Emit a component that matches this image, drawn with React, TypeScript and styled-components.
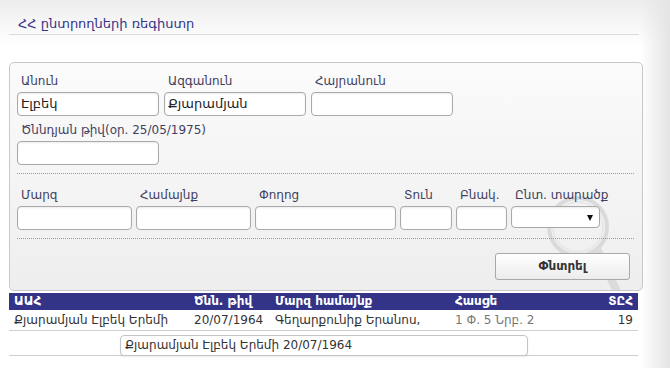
import React from 'react';
import styled, { createGlobalStyle } from 'styled-components';

const GlobalStyle = createGlobalStyle`
  html, body {
    margin: 0;
    padding: 0;
  }
  body {
    width: 670px;
    height: 368px;
    overflow: hidden;
    font-family: "DejaVu Sans", Verdana, sans-serif;
    font-size: 12px;
    color: #333;
    background:
      linear-gradient(to right, rgba(255,255,255,0) 0, rgba(255,255,255,0) 640px, #e4e4e4 670px),
      linear-gradient(to bottom, #ededed 0, #ffffff 45px);
  }
`

const Page = styled.div`
  padding: 0 31px 0 9px;
`

const TitleBar = styled.div`
  padding: 17px 0 0 9px;
  height: 17px;
  border-bottom: 1px solid #dcdcdc;
  color: #333388;
  font-size: 13px;
  line-height: 14px;
`

const Panel = styled.div`
  position: relative;
  margin-top: 27px;
  width: 617px;
  padding: 10px 8px 10px 7px;
  border: 1px solid #c8c8c8;
  border-radius: 5px;
  background: linear-gradient(to bottom, #fbfbfb 0, #eeeeee 100%);
  overflow: hidden;
`

const Row = styled.div<{ $gap?: number }>`
  display: flex;
  gap: ${p => p.$gap ?? 5}px;
  margin-bottom: 6px;
  position: relative;
  z-index: 1;
`

const Field = styled.div<{ $w: number }>`
  display: flex;
  flex-direction: column;
  width: ${p => p.$w}px;
`

const Label = styled.div`
  height: 16px;
  line-height: 16px;
  padding-left: 4px;
  margin-bottom: 3px;
  color: #3f3f5f;
  white-space: nowrap;
`

const Input = styled.div`
  box-sizing: border-box;
  height: 24px;
  line-height: 22px;
  padding-left: 3px;
  border: 1px solid #a9a9a9;
  border-radius: 4px;
  background: #fff;
  box-shadow: inset 0 1px 2px rgba(0,0,0,0.08);
  color: #222;
  font-size: 13px;
`

const Select = styled(Input)`
  height: 22px;
  position: relative;
  &::after {
    content: '';
    position: absolute;
    right: 6px;
    top: 8px;
    border-left: 3px solid transparent;
    border-right: 3px solid transparent;
    border-top: 6px solid #111;
  }
`

const Divider = styled.div<{ $after: number }>`
  border-top: 1px dotted #9a9a9a;
  margin: 8px 0 ${p => p.$after}px 0;
  position: relative;
  z-index: 1;
`

const ButtonRow = styled.div`
  display: flex;
  justify-content: flex-end;
  padding-right: 4px;
  position: relative;
  z-index: 1;
`

const Button = styled.div`
  box-sizing: border-box;
  width: 135px;
  height: 27px;
  line-height: 25px;
  text-align: center;
  border: 1px solid #a8a8a8;
  border-radius: 3px;
  background: linear-gradient(to bottom, #ffffff 0, #ececec 100%);
  font-weight: bold;
  color: #333;
`

const Watermark = styled.svg`
  position: absolute;
  left: 528px;
  top: 124px;
  opacity: 0.75;
`

const Table = styled.div`
  margin-top: 2px;
  width: 629px;
`

const cols = '180px 81px 180px 1fr 50px';

const HeadRow = styled.div`
  display: grid;
  grid-template-columns: ${cols};
  height: 17px;
  line-height: 17px;
  padding: 0 5px;
  background: #333388;
  color: #fff;
  font-weight: bold;
`

const BodyRow = styled.div`
  display: grid;
  grid-template-columns: ${cols};
  height: 20px;
  line-height: 20px;
  padding: 0 5px;
  border-bottom: 1px solid #cfcfcf;
  white-space: nowrap;
`

const Cell = styled.div<{ $right?: boolean; $muted?: boolean }>`
  text-align: ${p => (p.$right ? 'right' : 'left')};
  color: ${p => (p.$muted ? '#777' : 'inherit')};
  overflow: hidden;
`

const DetailRow = styled.div`
  height: 25px;
  padding: 4px 0 0 111px;
  box-sizing: border-box;
  border-bottom: 1px solid #cfcfcf;
`

const Hint = styled.div`
  box-sizing: border-box;
  width: 408px;
  height: 21px;
  line-height: 19px;
  padding-left: 4px;
  border: 1px solid #c4c4c4;
  border-radius: 4px;
  background: #fff;
  box-shadow: 0 1px 2px rgba(0,0,0,0.08);
  color: #333;
`

const App: React.FC = () => {
  return (
    <Page>
      <GlobalStyle />
      <TitleBar>ՀՀ ընտրողների ռեգիստր</TitleBar>

      <Panel>
        {/* faint magnifier drawn into the panel background */}
        <Watermark width="120" height="170" viewBox="0 0 120 170">
          <circle cx="40" cy="40" r="29" fill="none" stroke="#d2d2d2" strokeWidth="4" />
          <circle cx="40" cy="40" r="25" fill="none" stroke="#e4e4e4" strokeWidth="2" />
          <line x1="60" y1="64" x2="104" y2="158" stroke="#d4d4d4" strokeWidth="8" strokeLinecap="round" />
        </Watermark>

        <Row>
          <Field $w={142}>
            <Label>Անուն</Label>
            <Input>Էլբեկ</Input>
          </Field>
          <Field $w={142}>
            <Label>Ազգանուն</Label>
            <Input>Քյարամյան</Input>
          </Field>
          <Field $w={142}>
            <Label>Հայրանուն</Label>
            <Input />
          </Field>
        </Row>
        <Row>
          <Field $w={142}>
            <Label>Ծննդյան թիվ(օր. 25/05/1975)</Label>
            <Input />
          </Field>
        </Row>

        <Divider $after={13} />

        <Row $gap={4}>
          <Field $w={115}>
            <Label>Մարզ</Label>
            <Input />
          </Field>
          <Field $w={115}>
            <Label>Համայնք</Label>
            <Input />
          </Field>
          <Field $w={141}>
            <Label>Փողոց</Label>
            <Input />
          </Field>
          <Field $w={52}>
            <Label>Տուն</Label>
            <Input />
          </Field>
          <Field $w={51}>
            <Label>Բնակ.</Label>
            <Input />
          </Field>
          <Field $w={89}>
            <Label>Ընտ. տարածք</Label>
            <Select />
          </Field>
        </Row>

        <Divider $after={14} />

        <ButtonRow>
          <Button>Փնտրել</Button>
        </ButtonRow>
      </Panel>

      <Table>
        <HeadRow>
          <Cell>ԱԱՀ</Cell>
          <Cell>Ծնն. թիվ</Cell>
          <Cell>Մարզ համայնք</Cell>
          <Cell>Հասցե</Cell>
          <Cell $right>ՏԸՀ</Cell>
        </HeadRow>
        <BodyRow>
          <Cell>Քյարամյան Էլբեկ Երեմի</Cell>
          <Cell>20/07/1964</Cell>
          <Cell>Գեղարքունիք Երանոս,</Cell>
          <Cell $muted>1 Փ. 5 Նրբ. 2</Cell>
          <Cell $right>19</Cell>
        </BodyRow>
        <DetailRow>
          <Hint>Քյարամյան Էլբեկ Երեմի 20/07/1964</Hint>
        </DetailRow>
      </Table>
    </Page>
  );
}

export default App;
